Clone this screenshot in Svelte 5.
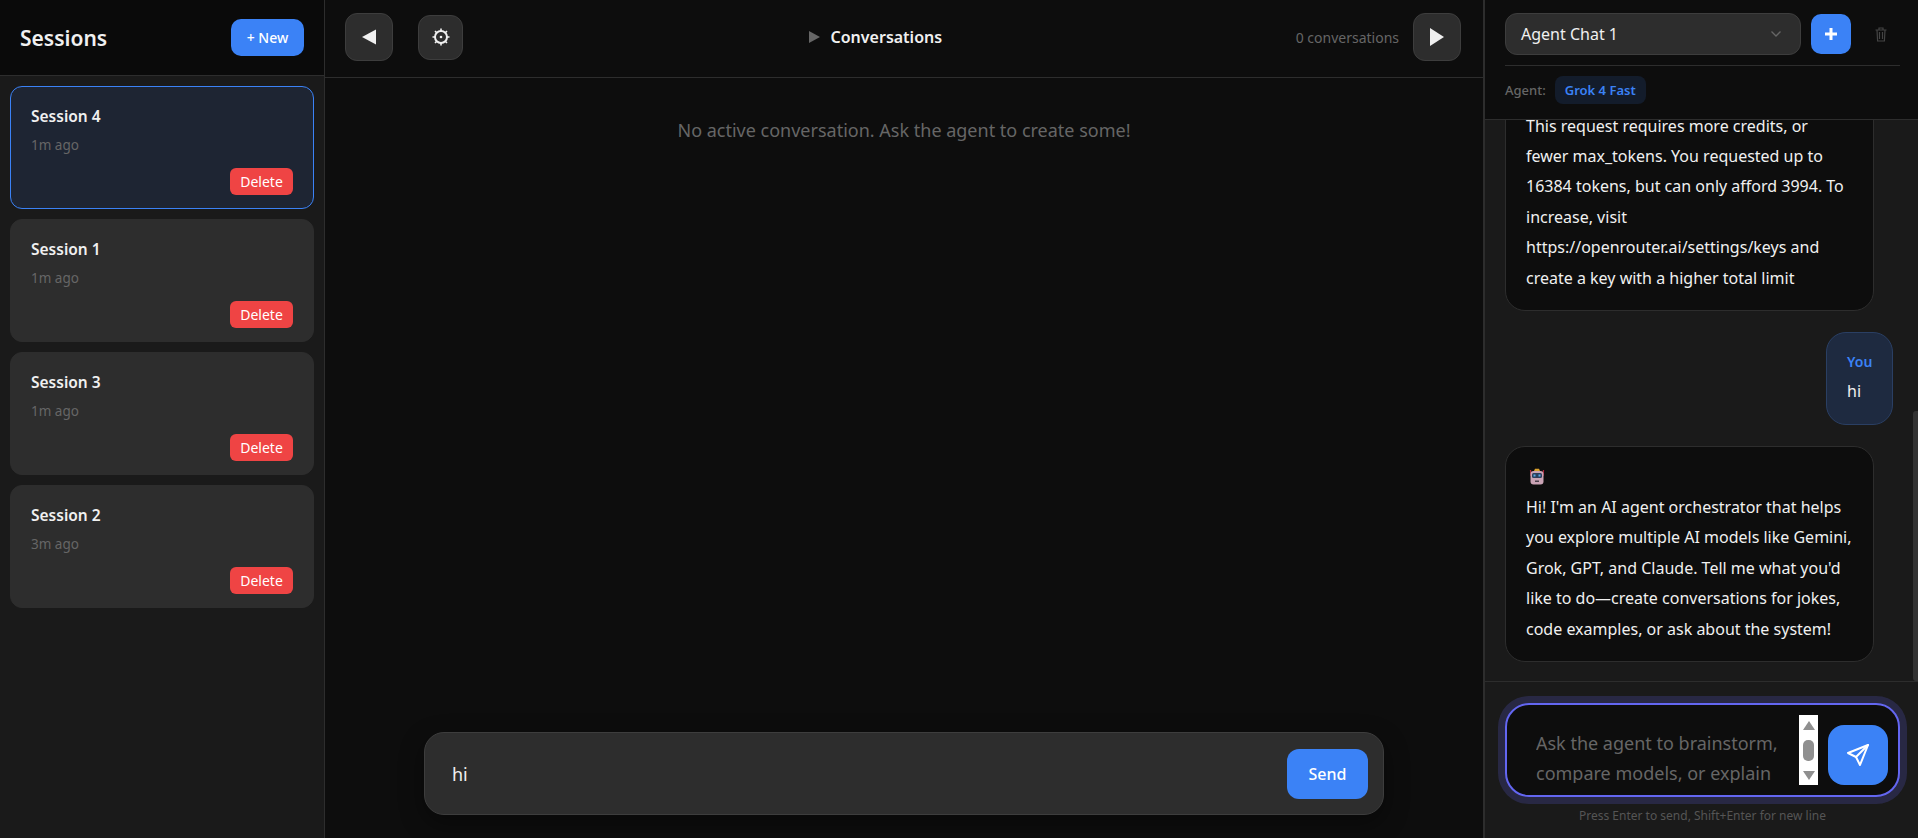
<script>
	let sessions = [
		{ id: 4, name: 'Session 4', age: '1m ago' },
		{ id: 1, name: 'Session 1', age: '1m ago' },
		{ id: 3, name: 'Session 3', age: '1m ago' },
		{ id: 2, name: 'Session 2', age: '3m ago' }
	];
	let activeId = $state(4);
	let prompt = $state('hi');
</script>

<div class="app">
	<aside class="sidebar">
		<div class="sidebar-header">
			<h2>Sessions</h2>
			<button class="btn-new">+ New</button>
		</div>
		<div class="session-list">
			{#each sessions as s}
				<div class="session" class:active={activeId === s.id}>
					<div class="session-name">{s.name}</div>
					<div class="session-age">{s.age}</div>
					<div class="session-actions">
						<button class="btn-delete">Delete</button>
					</div>
				</div>
			{/each}
		</div>
	</aside>

	<main class="main">
		<header class="main-header">
			<button class="icon-btn" aria-label="Collapse sessions">
				<svg width="16" height="16" viewBox="0 0 16 16"><path d="M1 8 15 0.5V15.5Z" fill="#f0f0f0" /></svg>
			</button>
			<button class="icon-btn small" aria-label="Settings">
				<svg width="20" height="20" viewBox="0 0 20 20">
					<circle cx="10" cy="10" r="6" fill="none" stroke="#f0f0f0" stroke-width="2" />
					<circle cx="10" cy="10" r="1.3" fill="#f0f0f0" />
					<path d="M10 1.500V4M10 16v2.500M1.500 10H4M16 10h2.500M4 4l1.700 1.700M14.300 14.300 16 16M16 4l-1.700 1.700M5.700 14.300 4 16" stroke="#f0f0f0" stroke-width="1.600" />
				</svg>
			</button>
			<div class="main-title">
				<svg width="11" height="12" viewBox="0 0 11 12"><path d="M0 0 11 6 0 12Z" fill="#666" /></svg>
				<span>Conversations</span>
			</div>
			<span class="count">0 conversations</span>
			<button class="icon-btn" aria-label="Collapse chat">
				<svg width="16" height="20" viewBox="0 0 16 20"><path d="M1 1 15 10 1 19Z" fill="#f0f0f0" /></svg>
			</button>
		</header>
		<div class="empty">No active conversation. Ask the agent to create some!</div>
		<div class="prompt-bar">
			<input class="prompt-input" bind:value={prompt} />
			<button class="btn-send">Send</button>
		</div>
	</main>

	<section class="chat">
		<div class="chat-header">
			<div class="chat-picker">
				<div class="chat-select">
					<span>Agent Chat 1</span>
					<svg width="12" height="8" viewBox="0 0 12 8"><path d="M1.500 1.500 6 6l4.500-4.500" fill="none" stroke="#666" stroke-width="1.300" /></svg>
				</div>
				<button class="btn-add" aria-label="New chat">
					<svg width="12" height="12" viewBox="0 0 12 12"><path d="M6 0v12M0 6h12" stroke="#fff" stroke-width="3" /></svg>
				</button>
				<button class="btn-trash" aria-label="Delete chat">
					<svg width="12" height="15" viewBox="0 0 12 15" fill="none" stroke="#444" stroke-width="1.200">
						<path d="M0.500 3h11M4 3V1h4v2M2 3l.6 11h6.800L10 3M4.500 5v7M7.500 5v7" />
					</svg>
				</button>
			</div>
			<div class="agent-row">
				<span class="agent-label">Agent:</span>
				<span class="agent-badge">Grok 4 Fast</span>
			</div>
		</div>

		<div class="messages">
			<div class="msg agent">
				This request requires more credits, or fewer max_tokens. You requested up to 16384 tokens, but can only afford 3994. To increase, visit https://openrouter.ai/settings/keys and create a key with a higher total limit
			</div>
			<div class="msg user">
				<div class="msg-author">You</div>
				<div>hi</div>
			</div>
			<div class="msg agent">
				<svg class="robot" width="16" height="17" viewBox="0 0 16 17">
					<path d="M1.500 2 2 8M14.500 2 14 8" stroke="#b3263e" stroke-width="1.200" />
					<path d="M5 3 6 0.800h4L11 3Z" fill="#d9a02c" />
					<rect x="1.500" y="3" width="13" height="13.500" rx="3" fill="#c9a3b4" />
					<rect x="3" y="5" width="10" height="5" rx="1.500" fill="#2c3f5c" />
					<rect x="4.500" y="6.500" width="2" height="2" fill="#5aa9e6" />
					<rect x="9.500" y="6.500" width="2" height="2" fill="#5aa9e6" />
					<rect x="6" y="12.500" width="4" height="1.500" fill="#4b3f4a" />
				</svg>
				<div>Hi! I'm an AI agent orchestrator that helps you explore multiple AI models like Gemini, Grok, GPT, and Claude. Tell me what you'd like to do—create conversations for jokes, code examples, or ask about the system!</div>
			</div>
			<div class="scroll-thumb"></div>
		</div>

		<div class="composer">
			<div class="composer-box">
				<textarea class="composer-input" rows="2" placeholder="Ask the agent to brainstorm, compare models, or explain"></textarea>
				<div class="fake-scrollbar">
					<span class="arrow up"></span>
					<span class="thumb"></span>
					<span class="arrow down"></span>
				</div>
				<button class="btn-go" aria-label="Send">
					<svg width="24" height="24" viewBox="0 0 24 24" fill="none" stroke="#fff" stroke-width="2" stroke-linejoin="round" stroke-linecap="round">
						<path d="M22 2 2 10l8 4 4 8Z" />
						<path d="M22 2 10 14" />
					</svg>
				</button>
			</div>
			<div class="hint">Press Enter to send, Shift+Enter for new line</div>
		</div>
	</section>
</div>

<style>
	:global(body) {
		margin: 0;
		background: #0d0d0d;
	}

	.app {
		display: flex;
		height: 838px;
		overflow: hidden;
		font-family: "Noto Sans", "Open Sans", sans-serif;
		color: #f0f0f0;
	}

	button {
		font-family: inherit;
		border: none;
		cursor: pointer;
	}

	.sidebar {
		width: 325px;
		flex-shrink: 0;
		box-sizing: border-box;
		background: #1a1a1a;
		border-right: 1px solid #2d2d2d;
	}

	.sidebar-header {
		height: 76px;
		box-sizing: border-box;
		display: flex;
		align-items: center;
		justify-content: space-between;
		padding: 0 20px;
		background: #0a0a0a;
		border-bottom: 1px solid #2d2d2d;
	}

	h2 {
		margin: 0;
		font-size: 21px;
		font-weight: 600;
	}

	.btn-new {
		width: 73px;
		height: 37px;
		background: #3b82f6;
		color: #fff;
		border-radius: 10px;
		font-size: 14px;
		font-weight: 500;
	}

	.session-list {
		display: flex;
		flex-direction: column;
		gap: 10px;
		padding: 10px;
	}

	.session {
		height: 123px;
		box-sizing: border-box;
		padding: 18px 20px 0;
		background: #2d2d2d;
		border: 1px solid #2d2d2d;
		border-radius: 12px;
	}

	.session.active {
		background: #1e2533;
		border-color: #3b82f6;
	}

	.session-name {
		font-size: 15.500px;
		font-weight: 600;
		line-height: 22px;
	}

	.session-age {
		margin-top: 9px;
		font-size: 13.500px;
		line-height: 18px;
		color: #666;
	}

	.session-actions {
		display: flex;
		justify-content: flex-end;
		margin-top: 14px;
	}

	.btn-delete {
		width: 63px;
		height: 27px;
		padding: 0;
		background: #ef4444;
		color: #fff;
		border-radius: 6px;
		font-size: 14px;
	}

	.main {
		flex: 1;
		min-width: 0;
		display: flex;
		flex-direction: column;
		background: #0d0d0d;
	}

	.main-header {
		height: 78px;
		box-sizing: border-box;
		flex-shrink: 0;
		display: flex;
		align-items: center;
		padding: 0 22px 3px 20px;
		border-bottom: 1px solid #2d2d2d;
	}

	.icon-btn {
		width: 48px;
		height: 48px;
		flex-shrink: 0;
		display: flex;
		align-items: center;
		justify-content: center;
		background: #2d2d2d;
		border: 1px solid #3d3d3d;
		border-radius: 12px;
	}

	.icon-btn.small {
		width: 45px;
		height: 45px;
		margin-left: 25px;
	}

	.main-title {
		flex: 1;
		display: flex;
		align-items: center;
		justify-content: center;
		gap: 11px;
		font-size: 16px;
		font-weight: 600;
		padding-left: 8px;
		padding-right: 16px;
	}

	.count {
		margin-right: 14px;
		font-size: 14px;
		color: #666;
	}

	.empty {
		flex: 1;
		padding-top: 39px;
		text-align: center;
		font-size: 18px;
		line-height: 27px;
		color: #666;
	}

	.prompt-bar {
		align-self: center;
		width: 960px;
		height: 83px;
		box-sizing: border-box;
		flex-shrink: 0;
		display: flex;
		align-items: center;
		gap: 16px;
		margin-bottom: 23px;
		padding: 0 15px 0 25px;
		background: #2d2d2d;
		border: 1px solid #3d3d3d;
		border-radius: 20px;
		box-shadow: 0 8px 24px rgba(0, 0, 0, 0.4);
	}

	.prompt-input {
		flex: 1;
		min-width: 0;
		background: none;
		border: none;
		outline: none;
		color: #f0f0f0;
		font-family: inherit;
		font-size: 18px;
	}

	.btn-send {
		width: 81px;
		height: 50px;
		background: #3b82f6;
		color: #fff;
		border-radius: 12px;
		font-size: 16px;
		font-weight: 500;
	}

	.chat {
		width: 435px;
		flex-shrink: 0;
		box-sizing: border-box;
		display: flex;
		flex-direction: column;
		background: #1a1a1a;
		border-left: 2px solid #2d2d2d;
	}

	.chat-header {
		height: 120px;
		box-sizing: border-box;
		flex-shrink: 0;
		padding: 13px 18px 0 20px;
		background: #0d0d0d;
		border-bottom: 1px solid #2d2d2d;
	}

	.chat-picker {
		display: flex;
		align-items: center;
		height: 52px;
		align-items: flex-start;
		border-bottom: 1px solid #2d2d2d;
	}

	.chat-select {
		width: 296px;
		height: 42px;
		box-sizing: border-box;
		display: flex;
		align-items: center;
		justify-content: space-between;
		padding: 0 18px 0 15px;
		background: #2d2d2d;
		border: 1px solid #3d3d3d;
		border-radius: 12px;
		font-size: 16px;
	}

	.btn-add {
		width: 40px;
		height: 40px;
		margin: 1px 0 0 10px;
		display: flex;
		align-items: center;
		justify-content: center;
		background: #3b82f6;
		border-radius: 10px;
	}

	.btn-trash {
		width: 30px;
		height: 42px;
		margin-left: 15px;
		padding: 0;
		display: flex;
		align-items: center;
		justify-content: center;
		background: none;
	}

	.agent-row {
		display: flex;
		align-items: center;
		gap: 9px;
		margin-top: 10px;
	}

	.agent-label {
		font-size: 13px;
		font-weight: 500;
		color: #666;
	}

	.agent-badge {
		height: 28px;
		box-sizing: border-box;
		padding: 0 10px;
		display: flex;
		align-items: center;
		background: #131c2b;
		border-radius: 8px;
		color: #3b82f6;
		font-size: 13px;
		font-weight: 600;
	}

	.messages {
		position: relative;
		flex: 1;
		min-height: 0;
		overflow: hidden;
		display: flex;
		flex-direction: column;
		justify-content: flex-end;
		gap: 21px;
		padding: 0 25px 19px 20px;
	}

	.msg {
		flex-shrink: 0;
		box-sizing: border-box;
		border-radius: 20px;
		font-size: 16px;
		line-height: 30.400px;
	}

	.msg.agent {
		width: 369px;
		padding: 17px 20px 17px 20px;
		background: #0d0d0d;
		border: 1px solid #2d2d2d;
	}

	.msg.user {
		align-self: flex-end;
		width: 67px;
		height: 93px;
		margin-right: 0;
		padding: 15px 20px;
		background: #1e2a40;
		border: 1px solid #2a3f63;
	}

	.msg-author {
		font-size: 14px;
		font-weight: 600;
		line-height: 28px;
		color: #3b82f6;
	}

	.robot {
		display: block;
		margin: 4px 0 7px 3px;
	}

	.scroll-thumb {
		position: absolute;
		right: 0;
		bottom: 0;
		width: 5px;
		height: 270px;
		background: #333;
		border-radius: 3px 0 0 3px;
	}

	.composer {
		height: 157px;
		box-sizing: border-box;
		flex-shrink: 0;
		padding: 21px 18px 0 20px;
		border-top: 1px solid #2d2d2d;
	}

	.composer-box {
		height: 94px;
		box-sizing: border-box;
		display: flex;
		align-items: flex-start;
		padding-left: 29px;
		background: #0d0d0d;
		border: 2px solid #6366f1;
		border-radius: 24px;
		box-shadow: 0 0 0 7px rgba(99, 102, 241, 0.2);
	}

	.composer-input {
		flex: 1;
		min-width: 0;
		height: 68px;
		margin-top: 10px;
		padding: 13px 0 0 0;
		box-sizing: border-box;
		resize: none;
		overflow: hidden;
		background: none;
		border: none;
		outline: none;
		color: #f0f0f0;
		font-family: inherit;
		font-size: 18px;
		line-height: 30px;
	}

	.composer-input::placeholder {
		color: #666;
	}

	.fake-scrollbar {
		width: 19px;
		height: 70px;
		margin-top: 10px;
		flex-shrink: 0;
		box-sizing: border-box;
		display: flex;
		flex-direction: column;
		align-items: center;
		justify-content: space-between;
		padding: 6px 0 5px;
		background: #fff;
	}

	.arrow {
		width: 0;
		height: 0;
		border-left: 6px solid transparent;
		border-right: 6px solid transparent;
	}

	.arrow.up {
		border-bottom: 9px solid #8f8f8f;
	}

	.arrow.down {
		border-top: 9px solid #8f8f8f;
	}

	.thumb {
		width: 11px;
		height: 21px;
		background: #8f8f8f;
		border-radius: 5px;
	}

	.btn-go {
		width: 60px;
		height: 60px;
		flex-shrink: 0;
		margin: 20px 10px 0 10px;
		display: flex;
		align-items: center;
		justify-content: center;
		background: #3b82f6;
		border-radius: 16px;
	}

	.hint {
		margin-top: 11px;
		text-align: center;
		font-size: 12px;
		line-height: 16px;
		color: #555;
	}
</style>
